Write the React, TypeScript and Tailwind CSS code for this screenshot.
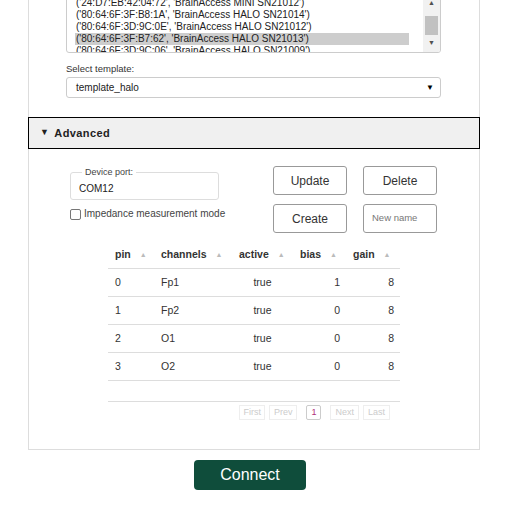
import React from 'react';

const devices = [
  "('24:D7:EB:42:04:72', 'BrainAccess MINI SN21012')",
  "('80:64:6F:3F:B8:1A', 'BrainAccess HALO SN21014')",
  "('80:64:6F:3D:9C:0E', 'BrainAccess HALO SN21012')",
  "('80:64:6F:3F:B7:62', 'BrainAccess HALO SN21013')",
  "('80:64:6F:3D:9C:06', 'BrainAccess HALO SN21009')",
];

const rows = [
  { pin: 0, ch: 'Fp1', active: 'true', bias: 1, gain: 8 },
  { pin: 1, ch: 'Fp2', active: 'true', bias: 0, gain: 8 },
  { pin: 2, ch: 'O1', active: 'true', bias: 0, gain: 8 },
  { pin: 3, ch: 'O2', active: 'true', bias: 0, gain: 8 },
];

const SortArrow = () => <span className="ml-[9px] text-[7px] text-[#bbb] align-middle">▲</span>;

const App: React.FC = () => {
  return (
    <div className="w-[508px] h-[515px] overflow-hidden bg-white font-['Liberation_Sans',Arial,sans-serif] text-[#333]">
      <div className="ml-[28px] w-[452px] -mt-[8px]">
        {/* Device list and template */}
        <div className="border-x border-[#ddd] pl-[37px] pr-[38px] pb-[19px]">
          <div className="flex h-[61px] border border-[#ccc] rounded-[3px] overflow-hidden">
            <div className="flex-1 pl-[8px] pr-[14px] pt-[4px] text-[10px] leading-[12px] text-[#222]">
              {devices.map((d, i) => (
                <div key={d} className={`h-[12px] whitespace-nowrap pl-[1px] ${i === 3 ? 'bg-[#cdcdcd]' : ''}`}>
                  {d}
                </div>
              ))}
            </div>
            <div className="w-[17px] bg-[#f1f1f1] flex flex-col items-center">
              <div className="h-[16px] flex items-end justify-center pb-[3px] text-[7px] leading-[7px] text-[#505050]">▲</div>
              <div className="mt-[7px] w-[13px] h-[19px] bg-[#c1c1c1]" />
              <div className="mt-[2px] h-[12px] flex items-center justify-center text-[7px] text-[#505050]">▼</div>
            </div>
          </div>
          <div className="mt-[10px] text-[9.5px] leading-[12px] text-[#333]">Select template:</div>
          <div className="mt-[2px] h-[21px] border border-[#ccc] rounded-[3px] flex items-center justify-between pl-[9px] pr-[6px] text-[10px] text-[#222]">
            <span>template_halo</span>
            <span className="text-[8px] text-black">▼</span>
          </div>
        </div>

        {/* Advanced header */}
        <div className="h-[32px] border border-black bg-[#f0f0f0] flex items-center pl-[11px] text-[11px] font-bold tracking-[0.4px] text-[#222]">
          <span className="text-[9px] mr-[5px]">▼</span>
          Advanced
        </div>

        {/* Advanced content */}
        <div className="h-[301px] border-x border-b border-[#ddd]">
          <div className="flex items-start pt-[17px]">
            <div className="ml-[41px] w-[149px]">
              <fieldset className="mt-[1px] h-[33px] border border-[#ddd] rounded-[3px] pl-[8px]">
                <legend className="ml-[3px] px-[3px] text-[9px] leading-[10px] text-[#444]">Device port:</legend>
                <div className="mt-[4px] text-[10px] text-[#222]">COM12</div>
              </fieldset>
              <label className="mt-[8px] flex items-center whitespace-nowrap text-[10px] leading-[12px] text-[#444]">
                <span className="shrink-0 w-[11px] h-[11px] border border-[#767676] rounded-[2px] bg-white mr-[3px]" />
                Impedance measurement mode
              </label>
            </div>
            <div className="ml-[54px] grid grid-cols-[74px_74px] gap-x-[16px] gap-y-[9px]">
              <button className="h-[29px] border border-[#999] rounded-[3px] bg-white text-[12px] text-[#333]">Update</button>
              <button className="h-[29px] border border-[#999] rounded-[3px] bg-white text-[12px] text-[#333]">Delete</button>
              <button className="h-[29px] border border-[#999] rounded-[3px] bg-white text-[12px] text-[#333]">Create</button>
              <div className="h-[29px] border border-[#999] rounded-[3px] flex items-center pl-[8px] text-[9.5px] text-[#777]">New name</div>
            </div>
          </div>

          {/* Channel table */}
          <div className="ml-[79px] w-[292px] mt-[8px]">
            <div className="grid grid-cols-[46px_78px_61px_53px_54px] h-[28px] items-center border-b border-[#ddd] text-[10.5px] font-bold text-[#333]">
              <div className="pl-[7px]">pin<SortArrow /></div>
              <div className="pl-[7px]">channels<SortArrow /></div>
              <div className="pl-[7px]">active<SortArrow /></div>
              <div className="pl-[7px]">bias<SortArrow /></div>
              <div className="pl-[7px]">gain<SortArrow /></div>
            </div>
            {rows.map((r) => (
              <div key={r.pin} className="grid grid-cols-[46px_78px_61px_53px_54px] h-[28px] items-center border-b border-[#ddd] text-[10.5px] text-[#333]">
                <div className="pl-[7px]">{r.pin}</div>
                <div className="pl-[7px]">{r.ch}</div>
                <div className="text-center">{r.active}</div>
                <div className="text-right pr-[6px]">{r.bias}</div>
                <div className="text-right pr-[6px]">{r.gain}</div>
              </div>
            ))}
            <div className="mt-[20px] border-t border-[#ddd] pt-[3px] pr-[10px] flex justify-end items-center gap-[4px] text-[9px] text-[#ccc]">
              <span className="h-[15px] px-[3px] border border-[#eee] flex items-center">First</span>
              <span className="h-[15px] px-[4px] border border-[#eee] flex items-center">Prev</span>
              <span className="mx-[5px] h-[15px] w-[15px] border border-[#ccc] rounded-[2px] flex items-center justify-center text-[#b0307a]">1</span>
              <span className="h-[15px] px-[4px] border border-[#eee] flex items-center">Next</span>
              <span className="h-[15px] px-[4px] border border-[#eee] flex items-center">Last</span>
            </div>
          </div>
        </div>
      </div>

      <div className="mt-[10px] ml-[194px] w-[112px] h-[30px] rounded-[4px] bg-[#0f4d3b] flex items-center justify-center text-[16px] text-white">
        Connect
      </div>
    </div>
  );
};

export default App;
